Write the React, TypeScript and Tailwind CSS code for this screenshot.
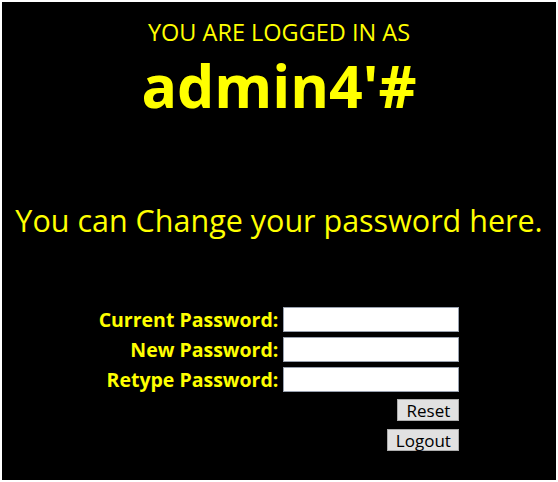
export default function App() {
  return (
    <div className="w-[558px] h-[482px] bg-white p-[2px]">
      <div
        className="h-full bg-black text-[#ffff00] flex flex-col items-center"
        style={{ fontFamily: '"Open Sans", "Noto Sans", sans-serif' }}
      >
        <p className="mt-[15px] text-[23.5px] leading-[30px]">YOU ARE LOGGED IN AS</p>
        <h1 className="mt-[5px] text-[59px] leading-[66px] font-bold">admin4'#</h1>
        <p className="mt-[82px] text-[30.5px] leading-[40px]">You can Change your password here.</p>

        <table className="mt-[62px] border-separate border-spacing-x-[5px] border-spacing-y-[5px]">
          <tbody>
            <tr>
              <td className="text-right text-[19.5px] font-bold leading-[24px]">Current Password:</td>
              <td>
                <input type="password" className="block w-[176px] h-[25px] bg-white border border-gray-400" />
              </td>
            </tr>
            <tr>
              <td className="text-right text-[19.5px] font-bold leading-[24px]">New Password:</td>
              <td>
                <input type="password" className="block w-[176px] h-[25px] bg-white border border-gray-400" />
              </td>
            </tr>
            <tr>
              <td className="text-right text-[19.5px] font-bold leading-[24px]">Retype Password:</td>
              <td>
                <input type="password" className="block w-[176px] h-[25px] bg-white border border-gray-400" />
              </td>
            </tr>
            <tr>
              <td></td>
              <td>
                <div className="h-[25px] pt-[2px] flex justify-end">
                  <button className="h-[22px] w-[62px] bg-[#e1e1e1] border border-[#adadad] text-black text-[17px] leading-none">
                    Reset
                  </button>
                </div>
              </td>
            </tr>
            <tr>
              <td></td>
              <td>
                <div className="h-[25px] pt-[2px] flex justify-end">
                  <button className="h-[22px] w-[72px] bg-[#e1e1e1] border border-[#adadad] text-black text-[17px] leading-none">
                    Logout
                  </button>
                </div>
              </td>
            </tr>
          </tbody>
        </table>
      </div>
    </div>
  );
}
